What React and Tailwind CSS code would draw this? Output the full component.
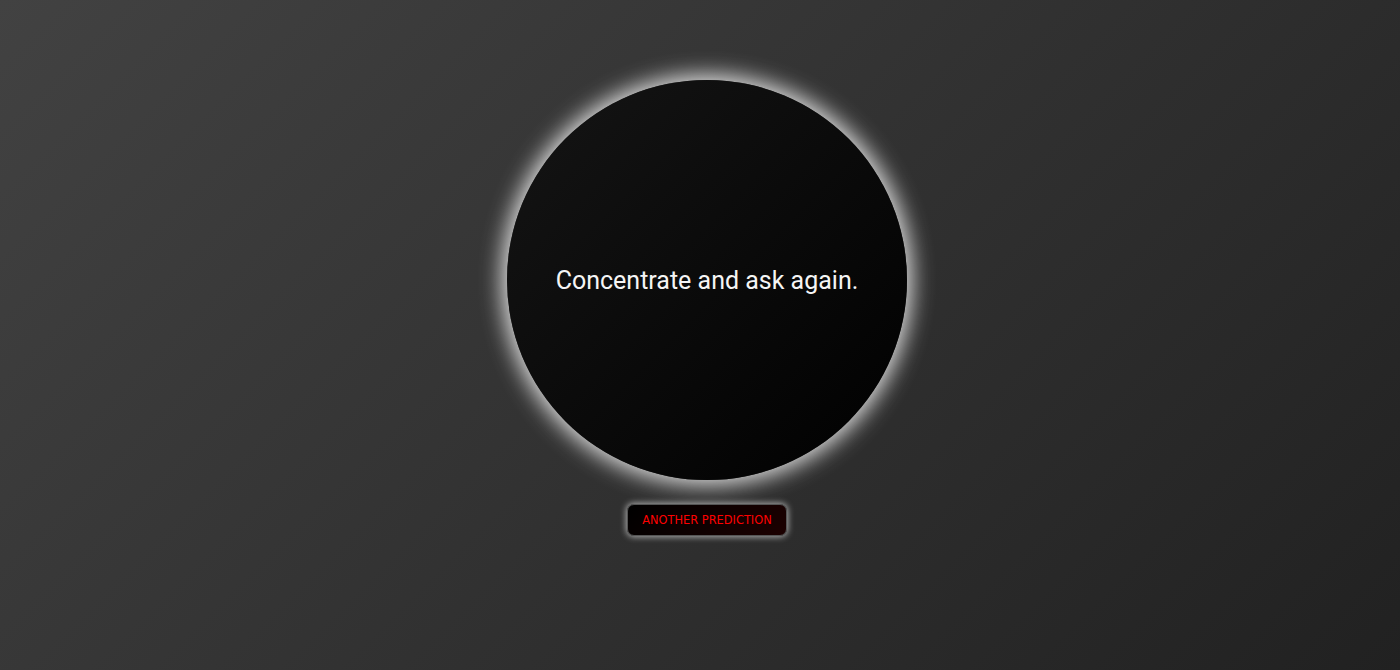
export default function App() {
  return (
    <div className="min-h-screen w-full bg-[linear-gradient(135deg,#424242,#212121)] flex flex-col items-center pt-[80px] pl-[14px]">
      <div className="w-[400px] h-[400px] rounded-full bg-[linear-gradient(135deg,#151515,#000000)] shadow-[0_0_22px_5px_rgba(255,255,255,0.85)] flex items-center justify-center">
        <p className="text-[25px] text-[#f5f5f5] font-['Roboto',sans-serif] mt-[2px]">
          Concentrate and ask again.
        </p>
      </div>
      <button
        type="button"
        className="mt-[24px] w-[160px] h-[32px] rounded-[7px] border border-[#555] bg-[linear-gradient(135deg,#000000,#1c0000)] shadow-[0_0_6px_1px_rgba(255,255,255,0.6)] text-[#ff0000] text-[11.4px] font-['DejaVu_Sans',sans-serif] flex items-center justify-center pt-[2px]"
      >
        ANOTHER PREDICTION
      </button>
    </div>
  );
}
